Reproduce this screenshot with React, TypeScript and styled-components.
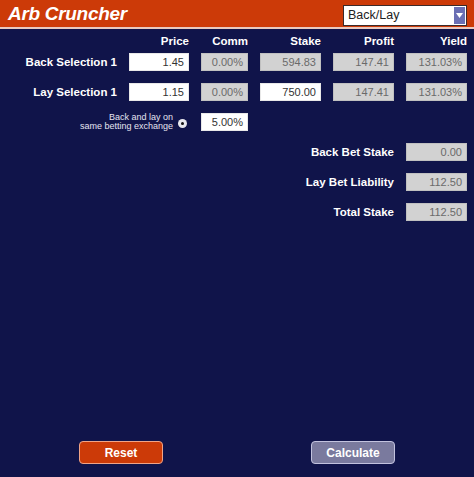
import React, { useState } from 'react';
import styled, { createGlobalStyle } from 'styled-components';

const GlobalStyle = createGlobalStyle`
  html, body {
    margin: 0;
    padding: 0;
    background: #10144a;
  }
  body {
    font-family: "Liberation Sans", Arial, sans-serif;
  }
`;

const Page = styled.div`
  width: 474px;
  height: 477px;
  background: #10144a;
  display: flex;
  flex-direction: column;
  overflow: hidden;
`;

const TitleBar = styled.header`
  height: 27px;
  background: #cc3a08;
  border-bottom: 2px solid #e9c9bf;
  display: flex;
  align-items: center;
  justify-content: space-between;
  padding: 0 7px 0 8px;
`;

const Title = styled.h1`
  margin: 0;
  color: #ffffff;
  font-size: 19px;
  font-weight: bold;
  font-style: italic;
  letter-spacing: -0.3px;
`;

const ModeSelect = styled.div`
  width: 118px;
  height: 19px;
  margin-top: 3px;
  background: #ffffff;
  border: 1px solid #3a2a2a;
  display: flex;
  align-items: center;
  justify-content: space-between;
  padding-left: 4px;
  font-size: 12.5px;
  color: #222;
`;

const SelectArrow = styled.span`
  width: 11px;
  height: 17px;
  margin-right: 1px;
  background: #6a6fb4;
  display: flex;
  align-items: center;
  justify-content: center;
`;

const Grid = styled.div`
  display: grid;
  grid-template-columns: 117px 60px 47px 61px 61px 61px;
  column-gap: 12px;
  row-gap: 12px;
  padding: 4px 0 0 0;
  align-items: center;
`;

const ColHead = styled.div`
  color: #ffffff;
  font-weight: bold;
  font-size: 11.5px;
  text-align: right;
  height: 16px;
  line-height: 16px;
  margin-bottom: -8px;
`;

const RowLabel = styled.div<{ $span?: number }>`
  grid-column: ${(p) => (p.$span ? `1 / span ${p.$span}` : 'auto')};
  color: #ffffff;
  font-weight: bold;
  font-size: 11.5px;
  text-align: right;
`;

const Field = styled.div<{ $readOnly?: boolean; $col?: number }>`
  grid-column: ${(p) => (p.$col ? p.$col : 'auto')};
  height: 18px;
  box-sizing: border-box;
  background: ${(p) => (p.$readOnly ? '#d2d2d2' : '#ffffff')};
  border: 1px solid ${(p) => (p.$readOnly ? '#c0c0c0' : '#e8e8e8')};
  color: ${(p) => (p.$readOnly ? '#6a6a6a' : '#333333')};
  font-size: 11px;
  text-align: right;
  line-height: 16px;
  padding-right: 4px;
`;

const ExchangeOption = styled.div`
  grid-column: 1 / span 2;
  height: 18px;
  display: flex;
  justify-content: flex-end;
  align-items: center;
  gap: 5px;
  padding-right: 2px;
`;

const SmallNote = styled.div`
  color: #e4e4f0;
  font-size: 9px;
  line-height: 9px;
  text-align: right;
`;

const Radio = styled.span`
  width: 9px;
  height: 9px;
  border-radius: 50%;
  background: #e8e8ee;
  display: flex;
  align-items: center;
  justify-content: center;
  margin-top: 2px;

  &::after {
    content: '';
    width: 3px;
    height: 3px;
    border-radius: 50%;
    background: #111;
  }
`;

const Spacer = styled.div`
  flex: 1;
`;

const ButtonBar = styled.div`
  display: flex;
  justify-content: space-between;
  padding: 0 79px 13px 79px;
`;

const ActionButton = styled.button<{ $variant: 'reset' | 'calc' }>`
  width: 84px;
  height: 23px;
  border-radius: 4px;
  border: 1px solid ${(p) => (p.$variant === 'reset' ? '#f0a488' : '#c2c2de')};
  background: ${(p) => (p.$variant === 'reset' ? '#cc3a08' : '#7a7a9e')};
  color: #ffffff;
  font-family: "Liberation Sans", Arial, sans-serif;
  font-weight: bold;
  font-size: 12px;
  padding: 0;
  cursor: pointer;
`;

const columns = ['Price', 'Comm', 'Stake', 'Profit', 'Yield'];

const selections = [
  { label: 'Back Selection 1', price: '1.45', comm: '0.00%', stake: '594.83', stakeEditable: false, profit: '147.41', yld: '131.03%' },
  { label: 'Lay Selection 1', price: '1.15', comm: '0.00%', stake: '750.00', stakeEditable: true, profit: '147.41', yld: '131.03%' },
];

const totals = [
  { label: 'Back Bet Stake', value: '0.00' },
  { label: 'Lay Bet Liability', value: '112.50' },
  { label: 'Total Stake', value: '112.50' },
];

function App() {
  const [mode] = useState('Back/Lay');

  return (
    <Page>
      <GlobalStyle />
      <TitleBar>
        <Title>Arb Cruncher</Title>
        <ModeSelect>
          {mode}
          <SelectArrow>
            <svg width="7" height="5" viewBox="0 0 7 5">
              <path d="M0 0 L7 0 L3.5 5 Z" fill="#ffffff" />
            </svg>
          </SelectArrow>
        </ModeSelect>
      </TitleBar>

      <Grid>
        <div />
        {columns.map((c) => (
          <ColHead key={c}>{c}</ColHead>
        ))}

        {selections.map((s) => (
          <React.Fragment key={s.label}>
            <RowLabel>{s.label}</RowLabel>
            <Field>{s.price}</Field>
            <Field $readOnly>{s.comm}</Field>
            <Field $readOnly={!s.stakeEditable}>{s.stake}</Field>
            <Field $readOnly>{s.profit}</Field>
            <Field $readOnly>{s.yld}</Field>
          </React.Fragment>
        ))}

        <ExchangeOption>
          <SmallNote>
            Back and lay on
            <br />
            same betting exchange
          </SmallNote>
          <Radio />
        </ExchangeOption>
        <Field>5.00%</Field>
        <div style={{ gridColumn: '4 / span 3' }} />

        {totals.map((t) => (
          <React.Fragment key={t.label}>
            <RowLabel $span={5}>{t.label}</RowLabel>
            <Field $readOnly $col={6}>{t.value}</Field>
          </React.Fragment>
        ))}
      </Grid>

      <Spacer />

      <ButtonBar>
        <ActionButton $variant="reset">Reset</ActionButton>
        <ActionButton $variant="calc">Calculate</ActionButton>
      </ButtonBar>
    </Page>
  );
}

export default App;
